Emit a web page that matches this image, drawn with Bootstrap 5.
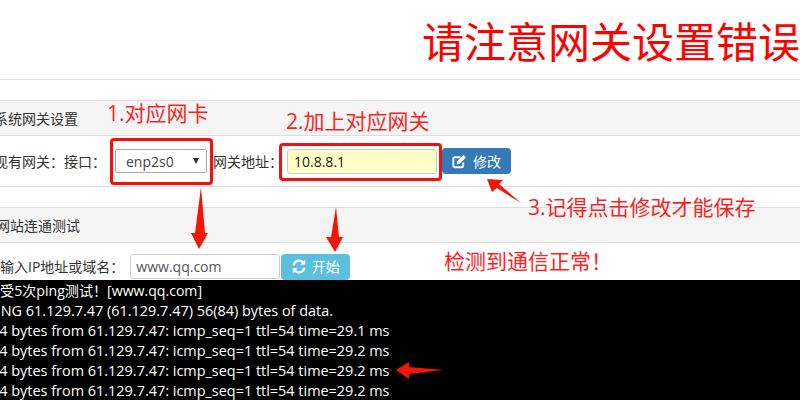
<!DOCTYPE html>
<html lang="zh">
<head>
<meta charset="utf-8">
<title>网关设置</title>
<link href="https://cdn.jsdelivr.net/npm/bootstrap@5.3.0/dist/css/bootstrap.min.css" rel="stylesheet">
<style>
html,body{height:400px;overflow:hidden;background:#fff}
body{font-family:"Open Sans","Noto Sans CJK SC",sans-serif;font-size:14px;color:#333}
.stage{position:relative;width:800px;height:400px;overflow:hidden}
.punct{font-family:"Noto Sans CJK TC",sans-serif}
.headline{height:80px;border-bottom:1px solid #ddd;color:#f00;font-size:42px;line-height:80px;font-family:"Noto Sans CJK SC",sans-serif;font-weight:400;white-space:nowrap}
.pane-head{height:36px;background:#f5f5f5;border-top:1px solid #ddd;border-bottom:1px solid #ddd;font-size:14px;padding-top:1px}
.gw-head{margin-top:20px}
.gw-row{height:51px;border-bottom:1px solid #ddd}
.test-row{height:37px;padding-top:10px}
.shift-a{margin-left:-6px}
.shift-b{margin-left:-4px}
.gw-select{width:92px;height:24px;margin-left:9px;margin-right:6px;padding:0 7px 0 10px;border:1px solid #aaa;border-radius:2px;background:#fff;color:#444;font-size:14px}
.gw-caret{width:0;height:0;border-left:3.5px solid transparent;border-right:3.5px solid transparent;border-top:6px solid #333}
.gw-input{width:150px;height:25px;margin-left:4px;padding:0 6px;border:1px solid #ccc;border-radius:3px;font-size:14px;color:#222;background:#ffffc8;box-shadow:none}
.gw-input.plain{background:#fff;margin-left:6px;padding:0 5px;color:#555}
.act-btn{height:26px;padding:0;border-radius:4px;font-size:14px;color:#fff;border:0;gap:6px}
.act-edit{width:69px;margin-left:5px;background:#337ab7}
.act-go{width:69px;margin-left:1px;background:#5bc0de}
.console-box{height:120px;background:#000;color:#fff;font-size:14.45px;line-height:20px;white-space:nowrap}
.console-box div:nth-child(1){margin-left:-14px;font-size:14.1px}
.console-box div:nth-child(2){margin-left:-12px}
.console-box div:nth-child(n+3){margin-left:-9px}
.callout{position:absolute;color:#ff1f1f;font-size:21px;line-height:28px;white-space:nowrap}
.c1{left:107px;top:99px}
.c2{left:286px;top:107px}
.c3{left:528px;top:193px}
.c4{left:444px;top:246px}
.mark-box{position:absolute;border:3px solid #f51010;border-radius:4px}
.b1{left:110px;top:138px;width:103px;height:47px}
.b2{left:279px;top:143px;width:163px;height:38px}
.arrows{position:absolute;left:0;top:0}
</style>
</head>
<body>
<div class="stage">
  <div class="headline d-flex justify-content-end"><span>请注意网关设置错误</span></div>

  <div class="pane-head gw-head d-flex align-items-center"><span class="shift-a">系统网关设置</span></div>
  <div class="gw-row d-flex align-items-center">
    <span class="shift-a">现有网关<span class="punct">：</span>接口<span class="punct">：</span></span>
    <div class="gw-select d-flex align-items-center justify-content-between"><span>enp2s0</span><span class="gw-caret"></span></div>
    <span>网关地址<span class="punct">：</span></span>
    <input class="form-control gw-input" value="10.8.8.1" aria-label="网关地址">
    <button class="btn act-btn act-edit d-flex align-items-center justify-content-center" type="button">
      <svg width="15" height="15" viewBox="0 0 16 15" aria-hidden="true"><path d="M12 8.5V12a1.6 1.6 0 0 1-1.6 1.6H3A1.6 1.6 0 0 1 1.4 12V4.6A1.6 1.6 0 0 1 3 3h6" fill="none" stroke="#fff" stroke-width="2"/><path d="M5.5 7.2 12.2.6l2.6 2.6-6.6 6.7-3 .4z" fill="#fff"/></svg>
      <span>修改</span>
    </button>
  </div>

  <div class="pane-head gw-head d-flex align-items-center"><span class="shift-b">网站连通测试</span></div>
  <div class="test-row d-flex align-items-center">
    <span>输入IP地址或域名<span class="punct">：</span></span>
    <input class="form-control gw-input plain" value="www.qq.com" aria-label="IP地址或域名">
    <button class="btn act-btn act-go d-flex align-items-center justify-content-center" type="button">
      <svg width="14" height="15" viewBox="0 0 14 15" aria-hidden="true"><path d="M1.6 6.2A5.5 5.5 0 0 1 11 3.3" fill="none" stroke="#fff" stroke-width="2.2"/><path d="M13.2.8v5h-5z" fill="#fff"/><path d="M12.4 8.8A5.5 5.5 0 0 1 3 11.7" fill="none" stroke="#fff" stroke-width="2.2"/><path d="M.8 14.2v-5h5z" fill="#fff"/></svg>
      <span>开始</span>
    </button>
  </div>

  <div class="console-box overflow-hidden">
    <div>接受5次ping测试<span class="punct">！</span>[www.qq.com]</div>
    <div>PING 61.129.7.47 (61.129.7.47) 56(84) bytes of data.</div>
    <div>64 bytes from 61.129.7.47: icmp_seq=1 ttl=54 time=29.1 ms</div>
    <div>64 bytes from 61.129.7.47: icmp_seq=1 ttl=54 time=29.2 ms</div>
    <div>64 bytes from 61.129.7.47: icmp_seq=1 ttl=54 time=29.2 ms</div>
    <div>64 bytes from 61.129.7.47: icmp_seq=1 ttl=54 time=29.2 ms</div>
  </div>

  <div class="mark-box b1"></div>
  <div class="mark-box b2"></div>
  <svg class="arrows" width="800" height="400" viewBox="0 0 800 400" aria-hidden="true" fill="#f51505">
    <polygon points="201,187 205,233 208,233 199,249 191,233 195,233"/>
    <polygon points="336,207 339,237 343,237 335,252 326,237 331,237"/>
    <polygon points="521,203 497,188 492,192 487,179 503,180 499,184"/>
    <polygon points="443,370 409,374 409,379 396,370 409,362 409,367"/>
  </svg>
  <div class="callout c1">1.对应网卡</div>
  <div class="callout c2">2.加上对应网关</div>
  <div class="callout c3">3.记得点击修改才能保存</div>
  <div class="callout c4">检测到通信正常<span class="punct">！</span></div>
</div>
<script src="https://cdn.jsdelivr.net/npm/bootstrap@5.3.0/dist/js/bootstrap.bundle.min.js"></script>
</body>
</html>
